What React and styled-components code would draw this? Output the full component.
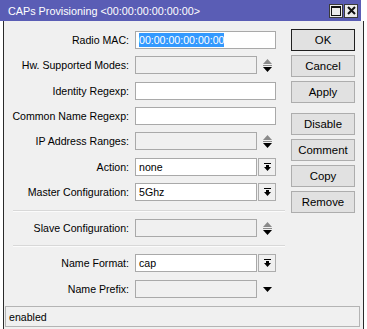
import React from "react";
import styled, { createGlobalStyle } from "styled-components";

const GlobalStyle = createGlobalStyle`
  html, body {
    margin: 0;
    padding: 0;
    background: #ffffff;
  }
  body {
    font-family: "Liberation Sans", Arial, sans-serif;
    font-size: 10.6px;
    color: #000;
  }
`;

const Window = styled.div`
  width: 366px;
  height: 329px;
  display: flex;
  flex-direction: column;
  overflow: hidden;
`;

const TitleBar = styled.div`
  width: 361px;
  height: 21px;
  flex: none;
  background: #5a5db5;
  color: #fff;
  display: flex;
  align-items: center;
  justify-content: space-between;
  padding: 0 3px 0 8px;
  box-sizing: border-box;
  font-size: 10.8px;
`;

const TitleControls = styled.div`
  display: flex;
  gap: 1px;
`;

const TitleButton = styled.div`
  width: 14px;
  height: 14px;
  box-sizing: border-box;
  background: #ececec;
  border: 1px solid #3a3a3a;
  display: flex;
  align-items: center;
  justify-content: center;
`;

const Frame = styled.div`
  flex: 1;
  margin-left: 3px;
  width: 361px;
  box-sizing: border-box;
  border-left: 1px solid #2a2a2a;
  border-right: 1px solid #2a2a2a;
  background: #f0f0f0;
  display: flex;
  flex-direction: column;
`;

const Content = styled.div`
  display: flex;
  padding-top: 9px;
  height: 285px;
  box-sizing: border-box;
`;

const Form = styled.div`
  display: flex;
  flex-direction: column;
  width: 286px;
`;

const Row = styled.div`
  display: flex;
  align-items: center;
  height: 18px;
  margin-top: ${(p) => p.$top ?? 7}px;
`;

const Label = styled.div`
  width: 125px;
  margin-right: 6px;
  text-align: right;
  white-space: nowrap;
`;

const Box = styled.div`
  width: ${(p) => p.$w}px;
  height: 18px;
  box-sizing: border-box;
  border: 1px solid #a9a9a9;
  background: ${(p) => (p.$disabled ? "#f0f0f0" : "#ffffff")};
  padding-left: 3px;
  display: flex;
  align-items: center;
  white-space: nowrap;
`;

const Selected = styled.span`
  background: #3399ff;
  color: #fff;
  line-height: 14px;
`;

const ComboButton = styled.div`
  width: 18px;
  height: 18px;
  margin-left: 1px;
  box-sizing: border-box;
  border: 1px solid #adadad;
  background: #f0f0f0;
  display: flex;
  align-items: center;
  justify-content: center;
`;

const ArrowSlot = styled.div`
  width: 19px;
  height: 18px;
  display: flex;
  align-items: center;
  justify-content: center;
  padding-left: 2px;
  box-sizing: border-box;
`;

const Separator = styled.div`
  margin: ${(p) => p.$mt}px 0 0 9px;
  width: 272px;
  border-top: 1px solid #d8d8d8;
  border-bottom: 1px solid #fbfbfb;
`;

const Buttons = styled.div`
  display: flex;
  flex-direction: column;
  margin-left: 1px;
  margin-top: -1px;
`;

const Button = styled.div`
  width: 64px;
  height: 22px;
  box-sizing: border-box;
  margin-top: ${(p) => p.$top ?? 4}px;
  border: 1px solid ${(p) => (p.$default ? "#202020" : "#adadad")};
  background: #e1e1e1;
  display: flex;
  align-items: center;
  justify-content: center;
  font-size: 11.4px;
`;

const StatusBar = styled.div`
  margin: 0 3px 0 1px;
  height: 21px;
  box-sizing: border-box;
  border: 1px solid #b4b4b4;
  padding-left: 3px;
  display: flex;
  align-items: center;
`;

const Spinner = () => (
  <svg width="9" height="13" viewBox="0 0 9 13">
    <path d="M4.5 0 L9 5 L0 5 Z" fill="#8a8a8a" />
    <rect x="0" y="6" width="9" height="1" fill="#8a8a8a" />
    <path d="M0 8 L9 8 L4.5 13 Z" fill="#000" />
  </svg>
);

const DropArrow = () => (
  <svg width="9" height="5" viewBox="0 0 9 5">
    <path d="M0 0 L9 0 L4.5 5 Z" fill="#000" />
  </svg>
);

const ComboIcon = () => (
  <svg width="7" height="8" viewBox="0 0 7 8">
    <rect x="0" y="0" width="7" height="1" fill="#000" />
    <rect x="2" y="2" width="3" height="2" fill="#000" />
    <path d="M0 4 L7 4 L3.5 8 Z" fill="#000" />
  </svg>
);

const MaxIcon = () => (
  <svg width="10" height="10" viewBox="0 0 10 10">
    <rect x="0.5" y="0.5" width="9" height="9" fill="none" stroke="#111" />
    <rect x="0" y="0" width="10" height="2" fill="#111" />
  </svg>
);

const CloseIcon = () => (
  <svg width="9" height="9" viewBox="0 0 9 9">
    <path d="M1 1 L8 8 M8 1 L1 8" stroke="#111" strokeWidth="2" />
  </svg>
);

const Field = ({ label, kind, value, top }) => {
  if (kind === "text") {
    return (
      <Row $top={top}>
        <Label>{label}</Label>
        <Box $w={141}>{value}</Box>
      </Row>
    );
  }
  if (kind === "combo") {
    return (
      <Row $top={top}>
        <Label>{label}</Label>
        <Box $w={122}>{value}</Box>
        <ComboButton>
          <ComboIcon />
        </ComboButton>
      </Row>
    );
  }
  return (
    <Row $top={top}>
      <Label>{label}</Label>
      <Box $w={122} $disabled />
      <ArrowSlot>{kind === "spin" ? <Spinner /> : <DropArrow />}</ArrowSlot>
    </Row>
  );
};

export default function App() {
  return (
    <>
      <GlobalStyle />
      <Window>
        <TitleBar>
          <span>CAPs Provisioning &lt;00:00:00:00:00:00&gt;</span>
          <TitleControls>
            <TitleButton>
              <MaxIcon />
            </TitleButton>
            <TitleButton>
              <CloseIcon />
            </TitleButton>
          </TitleControls>
        </TitleBar>
        <Frame>
          <Content>
            <Form>
              <Row $top={1}>
                <Label>Radio MAC:</Label>
                <Box $w={141}>
                  <Selected>00:00:00:00:00:00</Selected>
                </Box>
              </Row>
              <Field label="Hw. Supported Modes:" kind="spin" />
              <Field label="Identity Regexp:" kind="text" value="" top={8} />
              <Field label="Common Name Regexp:" kind="text" value="" />
              <Field label="IP Address Ranges:" kind="spin" />
              <Field label="Action:" kind="combo" value="none" top={8} />
              <Field label="Master Configuration:" kind="combo" value="5Ghz" />
              <Separator $mt={9} />
              <Field label="Slave Configuration:" kind="spin" top={7} />
              <Separator $mt={8} />
              <Field label="Name Format:" kind="combo" value="cap" top={7} />
              <Field label="Name Prefix:" kind="drop" top={8} />
            </Form>
            <Buttons>
              <Button $default $top={0}>OK</Button>
              <Button>Cancel</Button>
              <Button>Apply</Button>
              <Button $top={10}>Disable</Button>
              <Button>Comment</Button>
              <Button>Copy</Button>
              <Button>Remove</Button>
            </Buttons>
          </Content>
          <StatusBar>enabled</StatusBar>
        </Frame>
      </Window>
    </>
  );
}
